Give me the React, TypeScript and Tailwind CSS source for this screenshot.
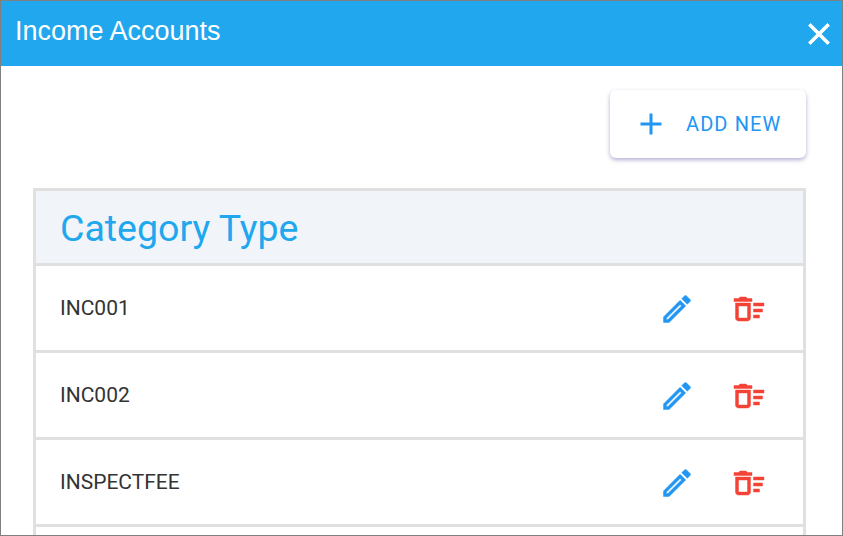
import React from "react";
import { MdAdd } from "react-icons/md";

const rows = ["INC001", "INC002", "INSPECTFEE", ""];

const CloseIcon = () => (
  <svg viewBox="0 0 24 24" className="h-[36px] w-[36px] fill-white stroke-white stroke-[0.6px]">
    <path d="M19 6.41 17.59 5 12 10.59 6.41 5 5 6.41 10.59 12 5 17.59 6.41 19 12 13.41 17.59 19 19 17.59 13.41 12z" />
  </svg>
);

const EditIcon = () => (
  <svg viewBox="0 0 24 24" className="h-[36px] w-[36px] fill-[#2196f3] stroke-[#2196f3] stroke-[0.3px]">
    <path d="M14.06 9.02l.92.92L5.92 19H5v-.92l9.06-9.06M17.66 3c-.25 0-.51.1-.7.29l-1.83 1.83 3.75 3.75 1.83-1.83c.39-.39.39-1.02 0-1.41l-2.34-2.34c-.2-.2-.45-.29-.71-.29zm-3.6 3.19L3 17.25V21h3.75L17.81 9.94l-3.75-3.75z" />
  </svg>
);

const DeleteSweepIcon = () => (
  <svg viewBox="0 0 24 24" className="h-[36px] w-[36px] fill-[#f44336] stroke-[#f44336] stroke-[0.3px]">
    <path d="M15 16h4v2h-4zm0-8h7v2h-7zm0 4h6v2h-6zM3 18c0 1.1.9 2 2 2h6c1.1 0 2-.9 2-2V8H3v10zm2-8h6v8H5v-8zm5-6H6L5 5H2v2h12V5h-3z" />
  </svg>
);

const App = () => {
  return (
    <div className="h-[536px] w-[843px] overflow-hidden border border-[#808080] bg-white font-['Roboto',sans-serif]">
      {/* Title bar */}
      <div className="flex h-[65px] items-center justify-between bg-[#20a7ee] pl-[14px] pr-[5px] text-white">
        <h1 className="pb-[5px] font-['Liberation_Sans',sans-serif] text-[27px] leading-none">
          Income Accounts
        </h1>
        <CloseIcon />
      </div>

      <div className="pl-[32px] pr-[36px]">
        {/* Add button */}
        <div className="flex justify-end pt-[24px] pb-[30px]">
          <button className="flex h-[68px] w-[196px] items-center rounded-[6px] bg-white pl-[23px] text-[20px] tracking-[1.1px] text-[#2196f3] shadow-[0_2px_4px_rgba(88,80,160,0.45)]">
            <MdAdd className="h-[36px] w-[36px]" />
            <span className="ml-[17px]">ADD NEW</span>
          </button>
        </div>

        {/* Table */}
        <div className="border-x-[3px] border-t-[3px] border-[#e0e0e0]">
          <div className="flex h-[75px] items-center border-b-[3px] border-[#e0e0e0] bg-[#f1f5fa] pl-[24px] pt-[3px] text-[37.5px] text-[#20a7ee]">
            Category Type
          </div>
          {rows.map((name, i) => (
            <div key={i} className="flex h-[87px] items-center justify-between border-b-[3px] border-[#e0e0e0] pl-[24px] pr-[36px] pt-[2px]">
              <span className="text-[21px] text-[#333333]">{name}</span>
              {name && (
                <div className="flex items-center gap-[36px]">
                  <EditIcon />
                  <DeleteSweepIcon />
                </div>
              )}
            </div>
          ))}
        </div>
      </div>
    </div>
  );
};

export default App;
